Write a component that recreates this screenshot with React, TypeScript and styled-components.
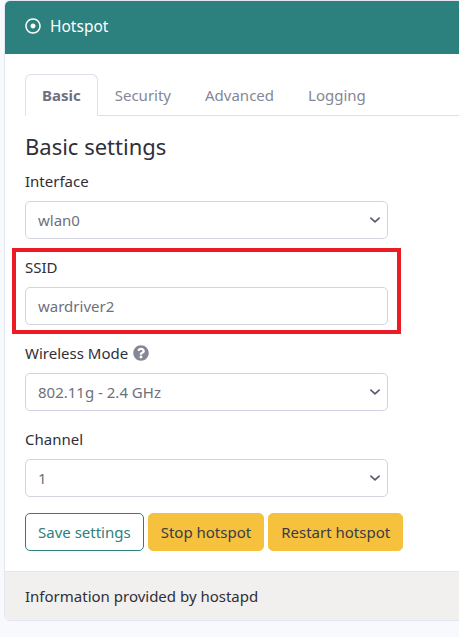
import React from "react";
import styled, { createGlobalStyle } from "styled-components";
import { FaRegDotCircle, FaQuestionCircle } from "react-icons/fa";

const Global = createGlobalStyle`
  html, body { margin: 0; padding: 0; background: #f8f9fc; overflow: hidden; }
  body { font-family: "Noto Sans", "Open Sans", sans-serif; font-size: 15px; line-height: 24px; color: #3a3b45; }
  * { box-sizing: border-box; }
`;

const Page = styled.div`
  padding-left: 4px;
  width: 700px;
`;

const Card = styled.div`
  width: 640px;
  background: #fff;
  border: 1px solid #e3e6f0;
  border-radius: 6px;
  overflow: hidden;
`;

const Header = styled.div`
  background: #2c807e;
  color: #fff;
  height: 53px;
  display: flex;
  align-items: center;
  gap: 9px;
  padding: 0 20px 4px;
  font-size: 15.5px;
`;

const Body = styled.div`
  padding: 20px;
`;

const Tabs = styled.div`
  display: flex;
  border-bottom: 1px solid #dddfeb;
  width: 700px;
`;

const Tab = styled.div<{ $active?: boolean }>`
  padding: 8px 16px 8px;
  margin-bottom: -1px;
  border: 1px solid ${(p) => (p.$active ? "#dddfeb" : "transparent")};
  border-bottom-color: ${(p) => (p.$active ? "#fff" : "transparent")};
  border-radius: 6px 6px 0 0;
  background: ${(p) => (p.$active ? "#fff" : "transparent")};
  color: ${(p) => (p.$active ? "#6e707e" : "#858796")};
  font-weight: ${(p) => (p.$active ? 700 : 400)};
`;

const Pane = styled.div`
  width: 363px;
`;

const Title = styled.h4`
  margin: 16px 0 8px;
  font-size: 22px;
  font-weight: 400;
  line-height: 29px;
  color: #2e2f3a;
`;

const Group = styled.div<{ $marked?: boolean }>`
  position: relative;
  margin-bottom: 16px;
  ${(p) =>
    p.$marked &&
    `&::before {
      content: "";
      position: absolute;
      top: -7px; bottom: -9px; left: -13px; right: -13px;
      border: 4px solid #ed1c24;
      pointer-events: none;
    }`}
`;

const Label = styled.label`
  display: flex;
  align-items: center;
  gap: 5px;
  margin-bottom: 8px;
  color: #2e2f3a;
`;

const Help = styled.span`
  display: inline-flex;
  color: #858796;
`;

const Field = styled.div<{ $select?: boolean }>`
  height: 38px;
  border: 1px solid #d1d3e2;
  border-radius: 5px;
  padding: ${(p) => (p.$select ? "0 6px 0 12px" : "0 12px")};
  display: flex;
  align-items: center;
  justify-content: space-between;
  color: #6e707e;
  background: #fff;
`;

const Chevron = styled.svg`
  width: 12px;
  height: 12px;
`;

const Buttons = styled.div`
  display: flex;
  gap: 4px;
`;

const Button = styled.button<{ $variant: "outline" | "warning" }>`
  height: 38px;
  padding: 0 12px;
  font-family: inherit;
  font-size: 15px;
  border-radius: 5px;
  border: 1px solid ${(p) => (p.$variant === "outline" ? "#2c807e" : "#f6c23e")};
  background: ${(p) => (p.$variant === "outline" ? "#fff" : "#f6c23e")};
  color: ${(p) => (p.$variant === "outline" ? "#2c807e" : "#3a3b45")};
`;

const Footer = styled.div`
  background: #f1f0ee;
  border-top: 1px solid #e3e6f0;
  padding: 12px 20px;
  height: 49px;
  color: #2e2f3a;
`;

const Select = ({ value }: { value: string }) => (
  <Field $select>
    <span>{value}</span>
    <Chevron viewBox="0 0 16 16">
      <path d="M2.5 5.5l5.5 5 5.5-5" fill="none" stroke="#5a5c69" strokeWidth="2.2" strokeLinecap="round" strokeLinejoin="round" />
    </Chevron>
  </Field>
);

export default function App() {
  return (
    <Page>
      <Global />
      <Card>
        <Header>
          <FaRegDotCircle size={16} />
          <span>Hotspot</span>
        </Header>
        <Body>
          <Tabs>
            <Tab $active>Basic</Tab>
            <Tab>Security</Tab>
            <Tab>Advanced</Tab>
            <Tab>Logging</Tab>
          </Tabs>
          <Pane>
            <Title>Basic settings</Title>
            <Group>
              <Label>Interface</Label>
              <Select value="wlan0" />
            </Group>
            <Group $marked>
              <Label>SSID</Label>
              <Field>wardriver2</Field>
            </Group>
            <Group>
              <Label>
                Wireless Mode
                <Help>
                  <FaQuestionCircle size={16} />
                </Help>
              </Label>
              <Select value="802.11g - 2.4 GHz" />
            </Group>
            <Group>
              <Label>Channel</Label>
              <Select value="1" />
            </Group>
          </Pane>
          <Buttons>
            <Button $variant="outline">Save settings</Button>
            <Button $variant="warning">Stop hotspot</Button>
            <Button $variant="warning">Restart hotspot</Button>
          </Buttons>
        </Body>
        <Footer>Information provided by hostapd</Footer>
      </Card>
    </Page>
  );
}
